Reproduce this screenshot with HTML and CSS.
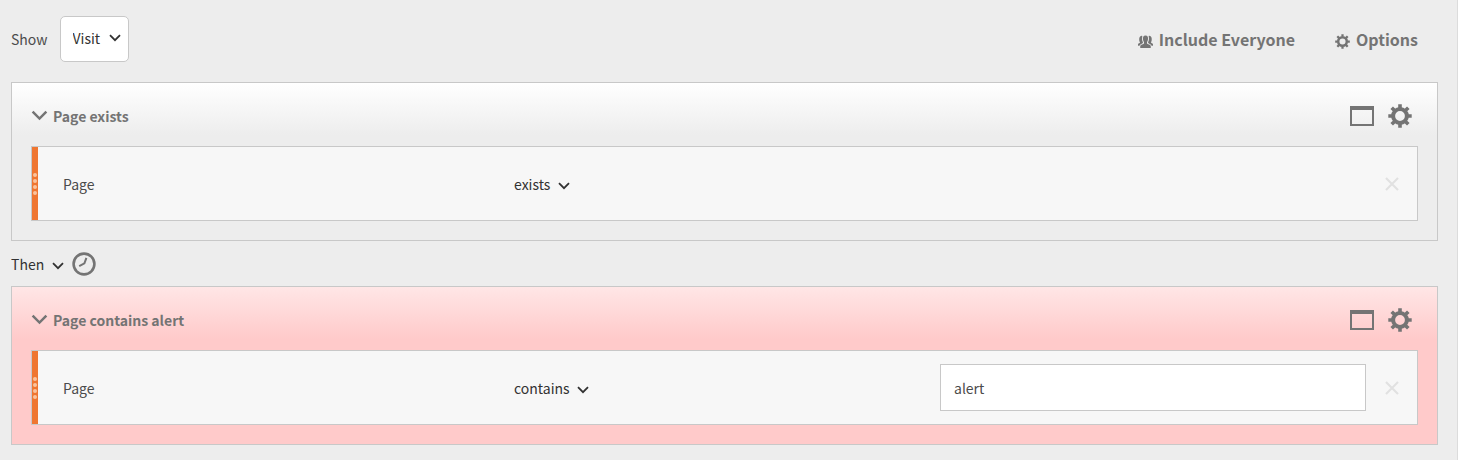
FILE: index.html
```
<!DOCTYPE html>
<html lang="en">
<head>
  <meta charset="UTF-8">
  <title>Segment Definition</title>
  <link rel="stylesheet" href="styles.css">
</head>
<body>
  <svg class="sprite" aria-hidden="true">
    <symbol id="chevron" viewBox="0 0 12 8">
      <path d="M1 1.2 L6 6.2 L11 1.2" fill="none" stroke="currentColor" stroke-width="1.8"/>
    </symbol>
    <symbol id="gear" viewBox="0 0 24 24">
      <circle cx="12" cy="12" r="6.9" fill="none" stroke="currentColor" stroke-width="4"/>
      <path d="M12 0.3V4 M12 20V23.7 M0.3 12H4 M20 12H23.7 M3.7 3.700L6.6 6.6 M17.4 17.4L20.3 20.3 M3.7 20.3L6.6 17.4 M17.4 6.6L20.3 3.7" fill="none" stroke="currentColor" stroke-width="3.6"/>
    </symbol>
    <symbol id="window" viewBox="0 0 24 20">
      <path d="M1 1H23V19H1Z" fill="none" stroke="currentColor" stroke-width="2"/>
      <path d="M0 0H24V4H0Z" fill="currentColor"/>
    </symbol>
    <symbol id="cross" viewBox="0 0 14 14">
      <path d="M1 1L13 13 M13 1L1 13" fill="none" stroke="currentColor" stroke-width="2.2"/>
    </symbol>
    <symbol id="clock" viewBox="0 0 24 24">
      <circle cx="12" cy="12" r="10.4" fill="none" stroke="currentColor" stroke-width="2.6"/>
      <path d="M14.4 5.8L12.4 11.4L7.2 14.2" fill="none" stroke="currentColor" stroke-width="2"/>
    </symbol>
    <symbol id="people" viewBox="0 0 16 14">
      <path d="M3.4 1C4.4 0.8 4.8 1.2 4.5 2.2C4.1 4 4.3 6 5.2 7.600V8.600L2.200 10.400L1.600 11.600H0V9.800C0.300 8.800 2.200 8.800 2.200 7.800C1 6.400 0.700 1.400 3.400 1Z" fill="currentColor"/>
      <path d="M12.600 1C11.600 0.800 11.200 1.200 11.500 2.200C11.900 4 11.700 6 10.800 7.600V8.600L13.800 10.400L14.400 11.600H16V9.800C15.700 8.800 13.800 8.800 13.800 7.800C15 6.400 15.300 1.400 12.600 1Z" fill="currentColor"/>
      <path d="M8 0.600C10.200 0.600 10.900 2.200 10.700 4.400C10.600 6 10 7 9.600 7.800V9.200C10 10 13.400 10.400 13.600 11.800V13.800H2.400V11.800C2.600 10.400 6 10 6.400 9.200V7.800C6 7 5.400 6 5.300 4.400C5.100 2.200 5.800 0.600 8 0.600Z" fill="currentColor"/>
    </symbol>
  </svg>

  <main class="builder">
    <div class="toolbar">
      <label for="show">Show</label>
      <div class="picker boxed">
        <select id="show"><option>Visit</option></select>
        <svg class="chevron"><use href="#chevron"/></svg>
      </div>
      <div class="toolbar-actions">
        <button class="action" type="button">
          <svg class="icon-small"><use href="#people"/></svg>Include Everyone
        </button>
        <button class="action" type="button">
          <svg class="icon-small"><use href="#gear"/></svg>Options
        </button>
      </div>
    </div>

    <section class="container">
      <div class="container-header">
        <button class="toggle" type="button">
          <svg class="chevron-large"><use href="#chevron"/></svg>Page exists
        </button>
        <button class="icon-btn" type="button" aria-label="Container"><svg class="icon-window"><use href="#window"/></svg></button>
        <button class="icon-btn" type="button" aria-label="Settings"><svg class="icon"><use href="#gear"/></svg></button>
      </div>
      <div class="rule">
        <div class="handle"><i></i><i></i><i></i><i></i></div>
        <label class="rule-name" for="operator1">Page</label>
        <div class="rule-operator">
          <div class="picker">
            <select id="operator1"><option>exists</option></select>
            <svg class="chevron"><use href="#chevron"/></svg>
          </div>
        </div>
        <div class="rule-value"></div>
        <button class="remove" type="button" aria-label="Remove"><svg><use href="#cross"/></svg></button>
      </div>
    </section>

    <div class="sequence">
      <div class="picker">
        <select aria-label="Sequence"><option>Then</option></select>
        <svg class="chevron"><use href="#chevron"/></svg>
      </div>
      <button class="icon-btn" type="button" aria-label="Time"><svg class="icon"><use href="#clock"/></svg></button>
    </div>

    <section class="container excluded">
      <div class="container-header">
        <button class="toggle" type="button">
          <svg class="chevron-large"><use href="#chevron"/></svg>Page contains alert
        </button>
        <button class="icon-btn" type="button" aria-label="Container"><svg class="icon-window"><use href="#window"/></svg></button>
        <button class="icon-btn" type="button" aria-label="Settings"><svg class="icon"><use href="#gear"/></svg></button>
      </div>
      <div class="rule">
        <div class="handle"><i></i><i></i><i></i><i></i></div>
        <label class="rule-name" for="operator2">Page</label>
        <div class="rule-operator">
          <div class="picker">
            <select id="operator2"><option>contains</option></select>
            <svg class="chevron"><use href="#chevron"/></svg>
          </div>
        </div>
        <div class="rule-value"><input type="text" value="alert" aria-label="Value"></div>
        <button class="remove" type="button" aria-label="Remove"><svg><use href="#cross"/></svg></button>
      </div>
    </section>
  </main>
</body>
</html>
```
FILE: styles.css
```
* {
  box-sizing: border-box;
}
body {
  margin: 0;
  background-color: #ededed;
  color: #4b4b4b;
  font-family: "Noto Sans CJK SC", "Noto Sans", sans-serif;
  font-size: 14px;
  line-height: 24px;
}
button, select, input {
  font: inherit;
  color: inherit;
}
button {
  background: none;
  border: none;
  padding: 0;
  cursor: pointer;
}
svg {
  display: block;
  flex: none;
}
.sprite {
  position: absolute;
  width: 0;
  height: 0;
}
.builder {
  min-height: 100vh;
  padding: 16px 19px 15px 11px;
  border-right: 1px solid #dcdcdc;
}

/* toolbar */
.toolbar {
  display: flex;
  align-items: center;
  gap: 12px;
  margin-bottom: 20px;
}
.toolbar-actions {
  display: flex;
  gap: 40px;
  margin-left: auto;
  padding-right: 20px;
}
.action {
  display: flex;
  align-items: center;
  gap: 6px;
  color: #747474;
  font-size: 16px;
  font-weight: bold;
}
.icon-small {
  width: 15px;
  height: 15px;
  margin-top: 4px;
}

/* drop-downs */
.picker {
  position: relative;
  color: #323232;
}
.picker select {
  display: block;
  appearance: none;
  background: none;
  border: none;
  padding: 0 19px 0 0;
  height: 24px;
}
.chevron {
  position: absolute;
  right: 0;
  top: 50%;
  width: 12px;
  height: 8px;
  margin-top: -2px;
  pointer-events: none;
}
.boxed select {
  height: 46px;
  padding: 0 27px 2px 12px;
  background-color: #fff;
  border: 1px solid #c8c8c8;
  border-radius: 5px;
}
.boxed .chevron {
  right: 8px;
  margin-top: -5px;
}

/* containers */
.container {
  padding: 0 19px 19px;
  border: 1px solid #c8c8c8;
  background: linear-gradient(#fff, #ededed 52px);
}
.container.excluded {
  background: linear-gradient(#ffe6e6, #ffcaca 52px);
}
.container-header {
  display: flex;
  align-items: center;
  gap: 14px;
  height: 63px;
  padding: 2px 6px 0 0;
}
.toggle {
  display: flex;
  align-items: center;
  gap: 5px;
  margin-right: auto;
  color: #747474;
  font-weight: bold;
}
.chevron-large {
  width: 17px;
  height: 11px;
}
.icon-btn {
  color: #747474;
}
.icon {
  width: 24px;
  height: 24px;
}
.icon-window {
  width: 24px;
  height: 20px;
}

/* rules */
.rule {
  display: flex;
  align-items: center;
  height: 75px;
  background-color: #f7f7f7;
  border: 1px solid #c8c8c8;
}
.handle {
  display: flex;
  flex-direction: column;
  align-items: center;
  justify-content: center;
  gap: 2px;
  width: 6px;
  height: 100%;
  margin-right: 25px;
  background-color: #ef7631;
}
.handle i {
  width: 4px;
  height: 4px;
  border-radius: 50%;
  background-color: #fbc39c;
}
.rule-name,
.rule-operator,
.rule-value {
  flex: 1 1 0;
  min-width: 0;
}
.rule-name {
  margin-right: 25px;
}
.rule-operator {
  display: flex;
}
.rule-value input {
  display: block;
  width: 100%;
  height: 47px;
  padding: 0 13px;
  background-color: #fff;
  border: 1px solid #c8c8c8;
}
.remove {
  display: flex;
  justify-content: center;
  width: 51px;
  color: #e1e1e1;
}
.remove svg {
  width: 14px;
  height: 14px;
}

/* sequence */
.sequence {
  display: flex;
  align-items: center;
  gap: 8px;
  height: 45px;
}
```
